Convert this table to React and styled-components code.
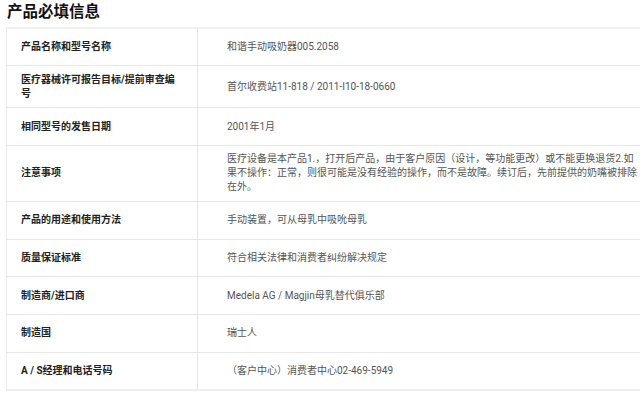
import React from 'react';
import styled, { createGlobalStyle } from 'styled-components';

const GlobalStyle = createGlobalStyle`
  html, body {
    margin: 0;
    padding: 0;
    background: #fff;
    overflow: hidden;
  }
  body {
    font-family: Roboto, "Noto Sans CJK SC", "Noto Sans", sans-serif;
  }
`;

const rows = [
  { label: '产品名称和型号名称', value: '和谐手动吸奶器005.2058' },
  { label: '医疗器械许可报告目标/提前审查编号', value: '首尔收费站11-818 / 2011-I10-18-0660' },
  { label: '相同型号的发售日期', value: '2001年1月' },
  {
    label: '注意事项',
    value:
      '医疗设备是本产品1.，打开后产品，由于客户原因（设计，等功能更改）或不能更换退货2.如果不操作：正常，则很可能是没有经验的操作，而不是故障。续订后，先前提供的奶嘴被排除在外。',
  },
  { label: '产品的用途和使用方法', value: '手动装置，可从母乳中吸吮母乳' },
  { label: '质量保证标准', value: '符合相关法律和消费者纠纷解决规定' },
  { label: '制造商/进口商', value: 'Medela AG / Magjin母乳替代俱乐部' },
  { label: '制造国', value: '瑞士人' },
  { label: 'A / S经理和电话号码', value: '（客户中心）消费者中心02-469-5949' },
];

export default function App() {
  return (
    <Page>
      <GlobalStyle />
      <Title>产品必填信息</Title>
      <InfoTable>
        <tbody>
          {rows.map((r) => (
            <Row key={r.label}>
              <Label>{r.label}</Label>
              <Value>{r.value}</Value>
            </Row>
          ))}
        </tbody>
      </InfoTable>
    </Page>
  );
}

const Page = styled.div`
  padding: 0 0 0 6px;
  width: 700px;
`;

const Title = styled.h2`
  margin: 0 0 7px 1px;
  font-size: 15.5px;
  line-height: 20px;
  font-weight: 700;
  color: #111;
  font-family: "Noto Sans CJK SC", sans-serif;
`;

const InfoTable = styled.table`
  width: 659px;
  border-collapse: collapse;
  table-layout: fixed;
  border-top: 2px solid #f0f0f0;
  border-left: 1px solid #ececec;
`;

const Row = styled.tr`
  border-bottom: 1px solid #e6e6e6;
  &:last-child {
    border-bottom: 2px solid #eeeeee;
  }
`;

const Label = styled.th`
  width: 191px;
  height: 37.7px;
  box-sizing: border-box;
  padding: 6.5px 14px;
  text-align: left;
  vertical-align: middle;
  font-size: 10px;
  line-height: 14px;
  font-weight: 700;
  color: #222;
  border-right: 1px solid #e6e6e6;
`;

const Value = styled.td`
  padding: 6.5px 24px 6.5px 29px;
  vertical-align: middle;
  font-size: 10px;
  line-height: 14px;
  color: #555;
`;
